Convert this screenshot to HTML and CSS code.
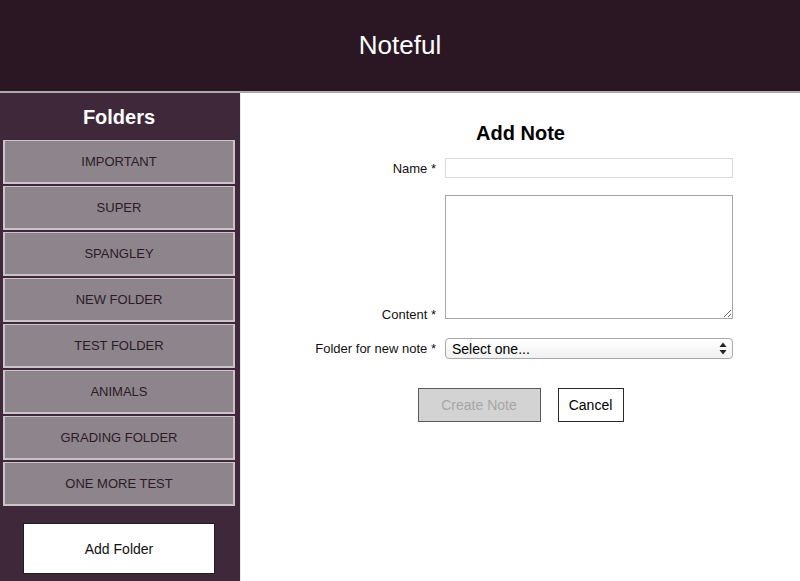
FILE: index.html
```html
<!DOCTYPE html>
<html lang="en">
<head>
<meta charset="utf-8">
<title>Noteful</title>
<link rel="stylesheet" href="styles.css">
</head>
<body>
<header class="app-header">
  <h1 class="app-title">Noteful</h1>
</header>
<div class="app-body">
  <nav class="sidebar">
    <h2 class="sidebar-title">Folders</h2>
    <ul class="folder-list">
      <li class="folder-item">IMPORTANT</li>
      <li class="folder-item">SUPER</li>
      <li class="folder-item">SPANGLEY</li>
      <li class="folder-item">NEW FOLDER</li>
      <li class="folder-item">TEST FOLDER</li>
      <li class="folder-item">ANIMALS</li>
      <li class="folder-item">GRADING FOLDER</li>
      <li class="folder-item">ONE MORE TEST</li>
    </ul>
    <button class="add-folder" type="button">Add Folder</button>
  </nav>
  <main class="main">
    <h2 class="form-title">Add Note</h2>
    <form class="note-form">
      <div class="form-grid">
        <label class="field-label" for="note-name">Name *</label>
        <input class="text-input" id="note-name" type="text">
        <label class="field-label label-bottom" for="note-content">Content *</label>
        <textarea class="text-area" id="note-content"></textarea>
        <label class="field-label label-select" for="note-folder">Folder for new note *</label>
        <div class="select-wrap">
          <select class="select" id="note-folder">
            <option>Select one...</option>
          </select>
          <svg class="select-arrows" width="8" height="13" viewBox="0 0 8 13" aria-hidden="true">
            <path d="M4 0.5 L7.5 5 L0.5 5 Z" fill="#222"/>
            <path d="M4 12.5 L7.5 8 L0.5 8 Z" fill="#222"/>
          </svg>
        </div>
      </div>
      <div class="form-actions">
        <button class="btn btn-create" type="submit" disabled>Create Note</button>
        <button class="btn btn-cancel" type="button">Cancel</button>
      </div>
    </form>
  </main>
</div>
</body>
</html>
```

FILE: styles.css
```css
* {
  box-sizing: border-box;
}

html, body {
  margin: 0;
  padding: 0;
}

body {
  width: 800px;
  height: 581px;
  overflow: hidden;
  font-family: "Liberation Sans", Arial, Helvetica, sans-serif;
  background: #ffffff;
  color: #000;
}

.app-header {
  height: 93px;
  background: #2b1723;
  border-bottom: 2px solid #aaaaaa;
  display: flex;
  align-items: center;
  justify-content: center;
}

.app-title {
  margin: 0;
  font-size: 26px;
  font-weight: normal;
  color: #ffffff;
  line-height: 29px;
}

.app-body {
  display: flex;
  height: 488px;
}

.sidebar {
  width: 240px;
  flex: 0 0 240px;
  background: #3e2839;
  padding: 12px 5px 0 3px;
  display: flex;
  flex-direction: column;
}

.sidebar-title {
  margin: 0 0 11px;
  height: 24px;
  line-height: 24px;
  font-size: 20px;
  font-weight: bold;
  color: #ffffff;
  text-align: center;
}

.folder-list {
  list-style: none;
  margin: 0;
  padding: 0;
}

.folder-item {
  height: 44px;
  margin-bottom: 2px;
  background: #8e848b;
  border: 2px solid #cbc4c9;
  border-top-width: 1px;
  display: flex;
  align-items: center;
  justify-content: center;
  font-size: 13px;
  color: #2b1b27;
}

.add-folder {
  display: block;
  width: 192px;
  height: 51px;
  margin: 15px auto 0;
  background: #ffffff;
  border: 1px solid #1e1e1e;
  font-family: inherit;
  font-size: 14px;
  color: #111;
  padding: 0;
}

.main {
  flex: 1;
  border-left: 1px solid #e9e9e9;
  padding-top: 28px;
}

.form-title {
  margin: 0;
  height: 24px;
  line-height: 24px;
  font-size: 20px;
  font-weight: bold;
  text-align: center;
}

.note-form {
  margin: 13px 0 0;
}

.form-grid {
  display: grid;
  grid-template-columns: 195px 288px;
  column-gap: 9px;
  row-gap: 17px;
  align-items: center;
}

.field-label {
  text-align: right;
  font-size: 13px;
  line-height: 15px;
  color: #111;
}

.label-bottom {
  align-self: end;
  margin-bottom: -3px;
}

.label-select {
  margin-top: 2px;
}

.text-input {
  display: block;
  width: 288px;
  height: 20px;
  margin: 0;
  border: 1px solid #d9d9d9;
  padding: 0 4px;
  font-family: inherit;
  font-size: 13px;
  background: #fff;
}

.text-area {
  display: block;
  width: 288px;
  height: 124px;
  margin: 0;
  border: 1px solid #a6a6a6;
  padding: 2px;
  font-family: inherit;
  font-size: 13px;
  background: #fff;
}

.select-wrap {
  position: relative;
  width: 288px;
  height: 21px;
  margin-top: 2px;
}

.select {
  display: block;
  width: 288px;
  height: 21px;
  margin: 0;
  -webkit-appearance: none;
  appearance: none;
  border: 1px solid #a9a9a9;
  border-radius: 4px;
  background: linear-gradient(#ffffff, #f1f1f1);
  padding: 0 20px 0 6px;
  font-family: inherit;
  font-size: 14px;
  color: #000;
}

.select-arrows {
  position: absolute;
  right: 6px;
  top: 4px;
  pointer-events: none;
}

.form-actions {
  display: flex;
  justify-content: center;
  gap: 17px;
  margin-top: 29px;
}

.btn {
  height: 34px;
  margin: 0;
  padding: 0;
  font-family: inherit;
  font-size: 14px;
}

.btn-create {
  width: 123px;
  background: #d3d3d3;
  border: 1px solid #5a5a5a;
  color: #a6a6a6;
}

.btn-cancel {
  width: 66px;
  background: #ffffff;
  border: 1px solid #2a2a2a;
  color: #000;
}
```
